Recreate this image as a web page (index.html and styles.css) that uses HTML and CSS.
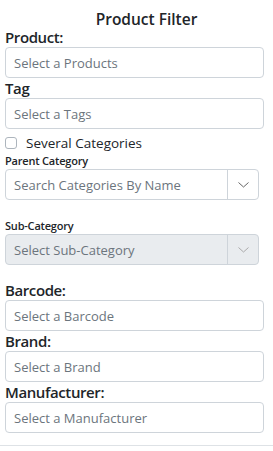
FILE: index.html
```html
<!DOCTYPE html>
<html lang="en">
<head>
  <meta charset="UTF-8" />
  <meta name="viewport" content="width=device-width,initial-scale=1" />
  <title>Product Filter</title>
  <link rel="stylesheet" href="styles.css">
</head>
<body>

  <div class="filter">
    <h2 class="filter-title">Product Filter</h2>

    <label class="field-label" for="product">Product:</label>
    <input class="field" id="product" type="text" placeholder="Select a Products">

    <label class="field-label" for="tag">Tag</label>
    <input class="field" id="tag" type="text" placeholder="Select a Tags">

    <label class="check-row">
      <span class="check-box"></span>
      <span>Several Categories</span>
    </label>

    <label class="small-label">Parent Category</label>
    <div class="select-group">
      <span class="select-text">Search Categories By Name</span>
      <span class="select-arrow">
        <svg width="11" height="6" viewBox="0 0 11 6"><path d="M0.5 0.5 L5.5 5 L10.5 0.5" fill="none" stroke="#666" stroke-width="1"/></svg>
      </span>
    </div>

    <label class="small-label sub">Sub-Category</label>
    <div class="select-group disabled">
      <span class="select-text">Select Sub-Category</span>
      <span class="select-arrow">
        <svg width="11" height="6" viewBox="0 0 11 6"><path d="M0.5 0.5 L5.5 5 L10.5 0.5" fill="none" stroke="#aaa" stroke-width="1"/></svg>
      </span>
    </div>

    <label class="field-label barcode" for="barcode">Barcode:</label>
    <input class="field" id="barcode" type="text" placeholder="Select a Barcode">

    <label class="field-label" for="brand">Brand:</label>
    <input class="field" id="brand" type="text" placeholder="Select a Brand">

    <label class="field-label" for="manufacturer">Manufacturer:</label>
    <input class="field" id="manufacturer" type="text" placeholder="Select a Manufacturer">
  </div>

  <hr class="divider">

</body>
</html>
```

FILE: styles.css
```css
body {
  font-family: "Open Sans", "Noto Sans", sans-serif;
  background: #fff;
  color: #212529;
  margin: 0;
  padding: 0;
}
.filter {
  display: flex;
  flex-direction: column;
  padding: 0 9px 0 5px;
}
.filter-title {
  margin: 0;
  padding: 11px 0 0 24px;
  font-size: 15.5px;
  font-weight: 600;
  line-height: 16px;
  text-align: center;
}
.field-label {
  font-size: 15px;
  font-weight: 600;
  line-height: 20px;
  letter-spacing: -.4px;
}
.field-label.barcode {
  margin-top: 15px;
}
.field {
  height: 31px;
  margin: 0;
  padding: 0 8px;
  border: 1px solid #ced4da;
  border-radius: 4px;
  font-family: inherit;
  font-size: 13px;
  color: #495057;
  box-sizing: border-box;
  outline: none;
}
.field::placeholder {
  color: #6c757d;
}
.check-row {
  display: flex;
  align-items: center;
  gap: 9px;
  padding-top: 3px;
  height: 21px;
  font-size: 13.5px;
  color: #212529;
}
.check-box {
  width: 12px;
  height: 12px;
  border: 1px solid #adb5bd;
  border-radius: 3px;
  box-sizing: border-box;
}
.small-label {
  font-size: 11px;
  font-weight: 600;
  line-height: 16px;
  letter-spacing: -.2px;
}
.small-label.sub {
  margin-top: 18px;
}
.select-group {
  display: flex;
  height: 31px;
  width: 254px;
  border: 1px solid #ced4da;
  border-radius: 4px;
  box-sizing: border-box;
}
.select-group.disabled {
  background: #e9ecef;
}
.select-text {
  flex: 1;
  display: flex;
  align-items: center;
  padding-left: 8px;
  font-size: 13px;
  color: #6c757d;
}
.select-arrow {
  width: 30px;
  display: flex;
  align-items: center;
  justify-content: center;
  border-left: 1px solid #ced4da;
}
.divider {
  margin: 12px 0 0;
  border: none;
  border-top: 1px solid #dee2e6;
}
```
